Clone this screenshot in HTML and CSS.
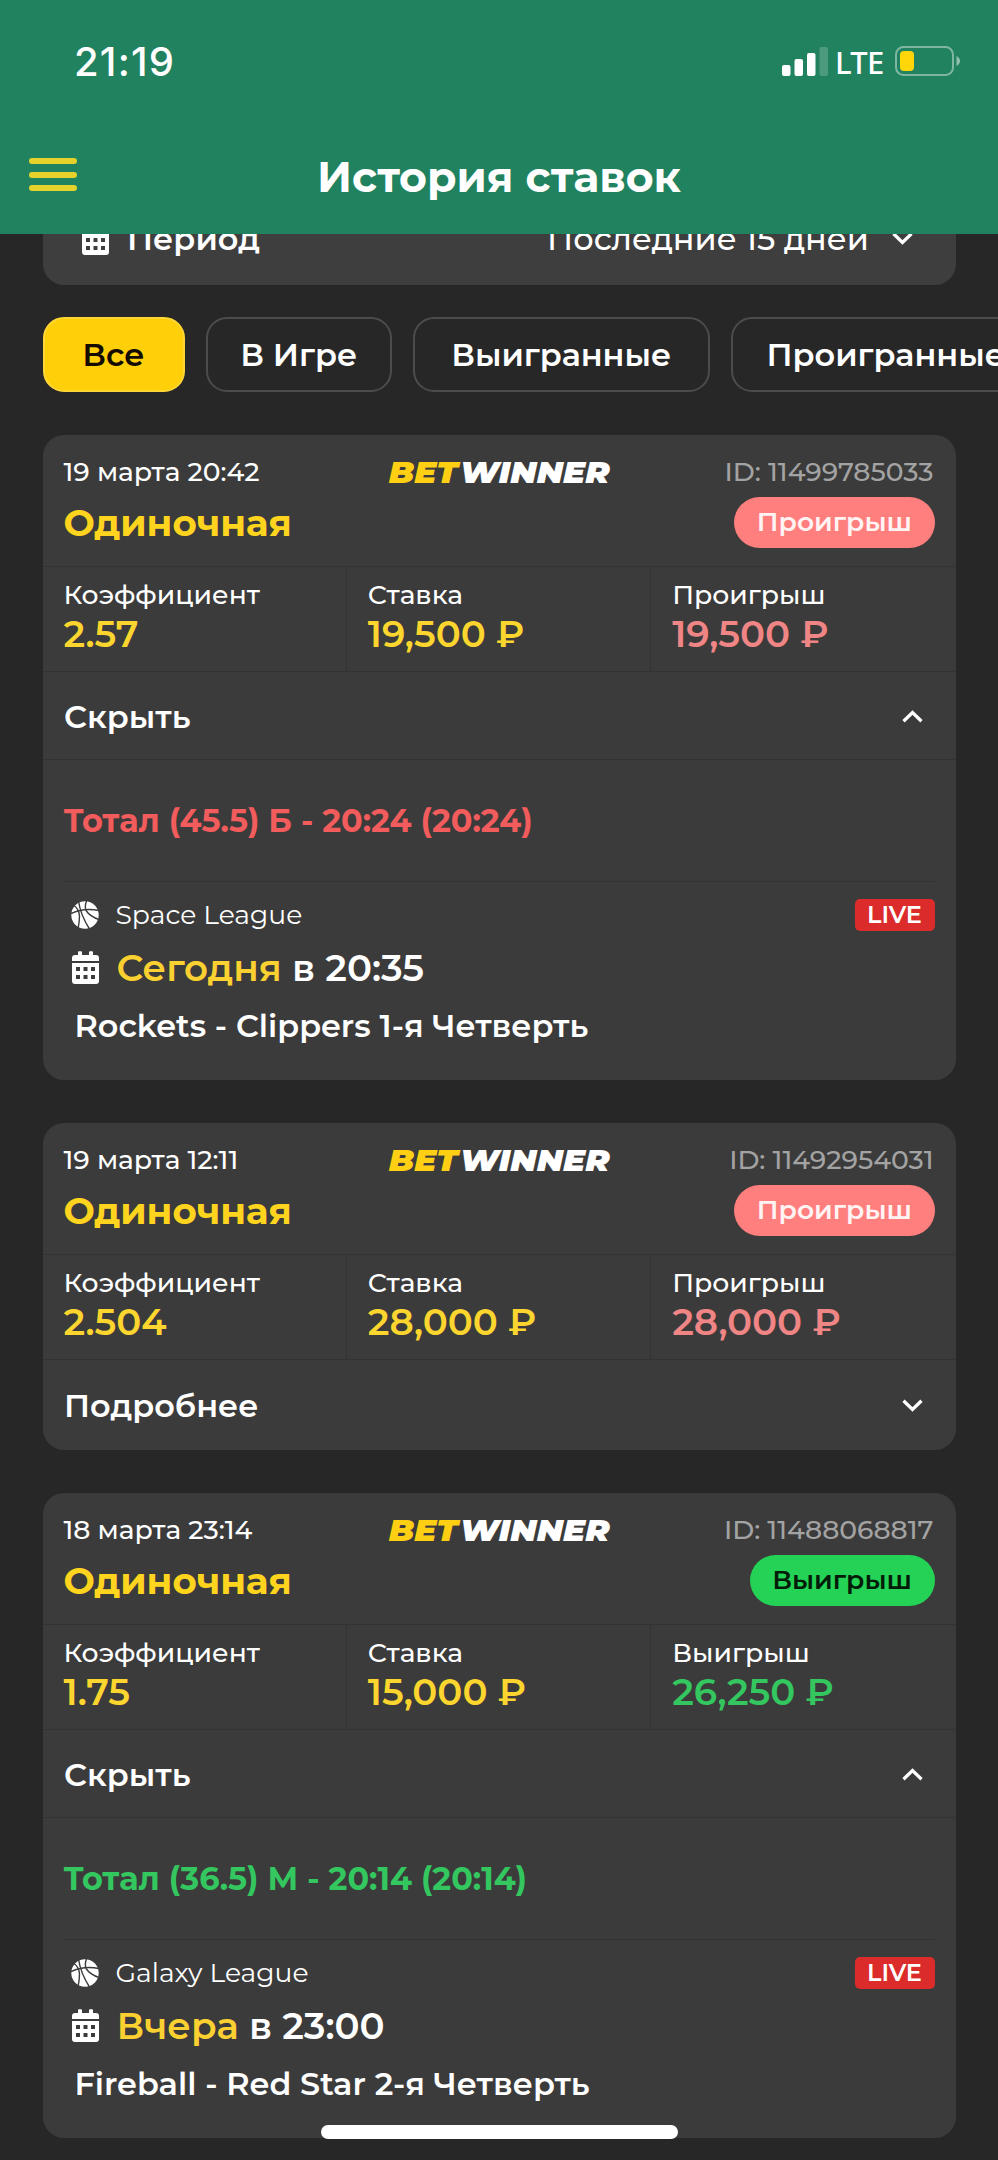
FILE: index.html
```html
<!DOCTYPE html>
<html lang="ru">
<head>
<meta charset="utf-8">
<title>История ставок</title>
<link rel="stylesheet" href="styles.css">
</head>
<body>
<svg class="defs" width="0" height="0">
  <symbol id="calendar" viewBox="0 0 27 33">
    <path fill="currentColor" fill-rule="evenodd" d="M3 4h3V1.200q0-.9.9-.9h2.200q.9 0 .9.900V4h7V1.200q0-.9.9-.9h2.200q.9 0 .9.900V4h3q3 0 3 3v3H0V7q0-3 3-3zM0 12h27v18q0 3-3 3H3q-3 0-3-3zM4 16v4h4v-4zM11.500 16v4h4v-4zM19 16v4h4v-4zM4 24v4h4v-4zM11.500 24v4h4v-4zM19 24v4h4v-4z"/>
  </symbol>
  <symbol id="ball" viewBox="0 0 28 28">
    <circle cx="14" cy="14" r="13.700" fill="currentColor"/>
    <g fill="none" stroke="#3b3b3b" stroke-width="1.400">
      <path d="M0 12.500Q13 6.500 28 9.500M7.500 0Q9.500 14 18.500 28M15.500 0Q13.500 5 15 9.500Q19 15.500 28 18.500M3 4.500Q8 8 8.500 15Q8.500 21 7 28"/>
    </g>
  </symbol>
  <symbol id="chevron" viewBox="0 0 21 13">
    <path d="M1.500 1.800L10.500 10.500L19.500 1.800" fill="none" stroke="currentColor" stroke-width="3.300"/>
  </symbol>
</svg>

<header class="header">
  <div class="status">
    <span class="clock">21:19</span>
    <div class="indicators">
      <svg class="signal" viewBox="0 0 46 30" fill="#fff"><rect x="0" y="19" width="8.500" height="11" rx="2"/><rect x="12.500" y="13" width="8.500" height="17" rx="2"/><rect x="25" y="7" width="8.500" height="23" rx="2"/><rect x="37.500" y="1" width="8.500" height="29" rx="2" opacity=".2"/></svg>
      <span class="network">LTE</span>
      <svg class="battery" viewBox="0 0 66 30"><rect x="1" y="1" width="57" height="28" rx="7.500" fill="none" stroke="#fff" stroke-opacity=".42" stroke-width="2"/><rect x="5" y="5" width="14" height="20" rx="4" fill="#ffd60a"/><path d="M61.500 10Q65 12 65 15T61.500 20z" fill="#fff" fill-opacity=".5"/></svg>
    </div>
  </div>
  <div class="titlebar">
    <button class="menu" aria-label="Меню"><i></i><i></i><i></i></button>
    <h1>История ставок</h1>
  </div>
</header>

<main class="page">
  <div class="period">
    <svg class="cal"><use href="#calendar"/></svg>
    <span class="period-label">Период</span>
    <span class="period-value">Последние 15 дней</span>
    <svg class="chev"><use href="#chevron"/></svg>
  </div>

  <nav class="tabs">
    <a class="tab tab-active">Все</a>
    <a class="tab tab-live">В Игре</a>
    <a class="tab tab-won">Выигранные</a>
    <a class="tab">Проигранные</a>
  </nav>

  <article class="card">
    <div class="head">
      <span class="date">19 марта 20:42</span>
      <span class="brand"><b>BET</b>WINNER</span>
      <span class="id">ID: 11499785033</span>
      <span class="kind">Одиночная</span>
      <span class="pill lost">Проигрыш</span>
    </div>
    <div class="stats">
      <div><span>Коэффициент</span><strong>2.57</strong></div>
      <div><span>Ставка</span><strong>19,500 ₽</strong></div>
      <div><span>Проигрыш</span><strong class="loss">19,500 ₽</strong></div>
    </div>
    <div class="toggle"><span>Скрыть</span><svg class="chev up"><use href="#chevron"/></svg></div>
    <div class="details">
      <div class="outcome out-lost">Тотал (45.5) Б - 20:24 (20:24)</div>
      <div class="league"><svg class="ball"><use href="#ball"/></svg><span>Space League</span><em>LIVE</em></div>
      <div class="when"><svg class="cal"><use href="#calendar"/></svg><span><b>Сегодня</b> в 20:35</span></div>
      <div class="match">Rockets - Clippers 1-я Четверть</div>
    </div>
  </article>

  <article class="card">
    <div class="head">
      <span class="date">19 марта 12:11</span>
      <span class="brand"><b>BET</b>WINNER</span>
      <span class="id">ID: 11492954031</span>
      <span class="kind">Одиночная</span>
      <span class="pill lost">Проигрыш</span>
    </div>
    <div class="stats">
      <div><span>Коэффициент</span><strong>2.504</strong></div>
      <div><span>Ставка</span><strong>28,000 ₽</strong></div>
      <div><span>Проигрыш</span><strong class="loss">28,000 ₽</strong></div>
    </div>
    <div class="toggle toggle-last"><span>Подробнее</span><svg class="chev"><use href="#chevron"/></svg></div>
  </article>

  <article class="card">
    <div class="head">
      <span class="date">18 марта 23:14</span>
      <span class="brand"><b>BET</b>WINNER</span>
      <span class="id">ID: 11488068817</span>
      <span class="kind">Одиночная</span>
      <span class="pill won">Выигрыш</span>
    </div>
    <div class="stats">
      <div><span>Коэффициент</span><strong>1.75</strong></div>
      <div><span>Ставка</span><strong>15,000 ₽</strong></div>
      <div><span>Выигрыш</span><strong class="gain">26,250 ₽</strong></div>
    </div>
    <div class="toggle"><span>Скрыть</span><svg class="chev up"><use href="#chevron"/></svg></div>
    <div class="details">
      <div class="outcome out-won">Тотал (36.5) М - 20:14 (20:14)</div>
      <div class="league"><svg class="ball"><use href="#ball"/></svg><span>Galaxy League</span><em>LIVE</em></div>
      <div class="when"><svg class="cal"><use href="#calendar"/></svg><span><b>Вчера</b> в 23:00</span></div>
      <div class="match">Fireball - Red Star 2-я Четверть</div>
    </div>
  </article>
</main>
<div class="home-bar"></div>
</body>
</html>
```
FILE: styles.css
```css
* { box-sizing: border-box; }
html { background: #272727; }
body {
  margin: 0;
  width: 998px;
  height: 2160px;
  overflow: hidden;
  position: relative;
  background: #272727;
  color: #fff;
  font-family: Montserrat, Inter, sans-serif;
  font-weight: 500;
  white-space: nowrap;
}
svg { display: block; flex: none; }
.defs { position: absolute; }

.header { position: relative; z-index: 2; height: 234px; background: #21825f; }
.status {
  display: flex;
  justify-content: space-between;
  align-items: center;
  height: 122px;
  padding: 0 37px 0 74px;
  font-family: Inter, sans-serif;
}
.clock { font-size: 40px; font-weight: 500; letter-spacing: 1.200px; }
.indicators { display: flex; align-items: center; }
.signal { width: 46px; height: 30px; }
.network { margin: 1px 11px 0 7px; font-family: "Noto Sans", sans-serif; font-size: 31px; line-height: 30px; width: 49px; letter-spacing: -.7px; }
.battery { width: 66px; height: 30px; }
.titlebar { display: grid; grid-template-columns: 48px 1fr 48px; padding: 0 29px; height: 110px; align-items: center; }
.menu { display: grid; gap: 7.500px; padding: 0; border: 0; background: none; margin-top: -5px; }
.menu i { height: 6px; border-radius: 3px; background: #e5d32c; }
h1 { margin: 0; text-align: center; font-size: 42.600px; line-height: 50px; font-weight: 700; }

.page { padding: 0 42.500px; }
.period {
  display: flex;
  align-items: center;
  height: 94px;
  margin-top: -43px;
  padding: 0 42.500px 0 39.500px;
  border-radius: 0 0 21px 21px;
  background: #3e3e3e;
  font-size: 31.900px;
}
.cal { width: 27px; height: 33px; }
.period-label { margin-left: 18px; font-weight: 600; }
.period-value { margin-left: auto; margin-right: 23px; }
.chev { width: 21px; height: 13px; }
.up { transform: rotate(180deg); }

.tabs { display: flex; gap: 21px; margin-top: 32px; }
.tab {
  flex: none;
  height: 75px;
  line-height: 71px;
  padding: 0 34px;
  border: 2px solid #4c4c4c;
  border-radius: 21px;
  font-size: 31.900px;
  font-weight: 600;
  text-align: center;
}
.tab-active { width: 142px; padding: 0; background: #ffcf0a; border-color: #ffd633; color: #140c00; }
.tab-live { width: 186.500px; padding: 0; }
.tab-won { width: 296.500px; padding: 0; }

.card { margin-top: 42.500px; border-radius: 21px; background: #3b3b3b; }
.head {
  display: grid;
  grid-template-columns: 1fr auto 1fr;
  grid-template-rows: 36px 51px;
  row-gap: 6.500px;
  align-items: center;
  height: 132.500px;
  padding: 20px 21px 0;
  border-bottom: 1.500px solid #333;
  font-size: 26.600px;
}
.date, .id { line-height: 34px; margin-top: -2px; }
.id { text-align: right; color: #a3a3a3; margin-right: 1px; }
.brand { font-size: 31px; line-height: 34px; margin-top: -2px; font-weight: 900; font-style: italic; transform: scaleX(1.06); }
.brand b { color: #ffcf14; font-weight: 900; margin-right: 2px; }
.kind { grid-column: 1; font-size: 37.200px; font-weight: 700; color: #ffd41f; }
.pill { grid-column: 3; justify-self: end; height: 51px; padding: 0 22.500px; line-height: 50px; border-radius: 26px; font-weight: 600; }
.lost { background: #ff7e7e; color: #fff3f3; }
.won { background: #24d255; color: #031c08; }

.stats { display: grid; grid-template-columns: 1fr 1fr 1fr; height: 105px; border-bottom: 1.500px solid #333; }
.stats div { padding: 11px 21px 0; border-right: 1.500px solid #343434; }
.stats div:last-child { border-right: 0; }
.stats span { display: block; font-size: 26.600px; line-height: 33px; }
.stats strong { display: block; font-size: 37.200px; line-height: 45px; font-weight: 600; color: #fcd62e; }
.stats .loss { color: #f08585; }
.stats .gain { color: #34c75f; }

.toggle {
  display: flex;
  justify-content: space-between;
  align-items: center;
  height: 88px;
  padding: 2px 32.500px 0 21.500px;
  border-bottom: 1.500px solid #333;
  font-size: 31.900px;
  font-weight: 600;
}
.toggle-last { height: 90px; border-bottom: 0; padding-top: 0; }

.details { height: 320px; padding: 0 21px; }
.outcome { height: 121.500px; line-height: 121.500px; border-bottom: 1.500px solid #333; font-size: 31.900px; font-weight: 700; }
.out-lost { color: #f25c5c; }
.out-won { color: #34c75f; }
.league { display: flex; align-items: center; margin-top: 17px; height: 32px; padding-left: 7px; font-size: 26.600px; font-weight: 400; }
.ball { width: 28px; height: 28px; margin-right: 17px; }
.league em {
  margin-left: auto;
  width: 80px;
  height: 32px;
  line-height: 32px;
  border-radius: 5px;
  background: #dc2b2b;
  text-align: center;
  font-size: 24px;
  font-style: normal;
  font-weight: 600;
}
.when { display: flex; align-items: center; gap: 18px; margin-top: 17px; height: 40px; padding-left: 8px; font-size: 37.200px; font-weight: 600; }
.when b { font-weight: 600; color: #fbd031; }
.match { margin-top: 18px; padding-left: 11px; font-size: 31.900px; line-height: 40px; font-weight: 600; }

.home-bar { position: absolute; z-index: 3; left: 321px; top: 2125px; width: 357px; height: 14px; border-radius: 7px; background: #fff; }
```
